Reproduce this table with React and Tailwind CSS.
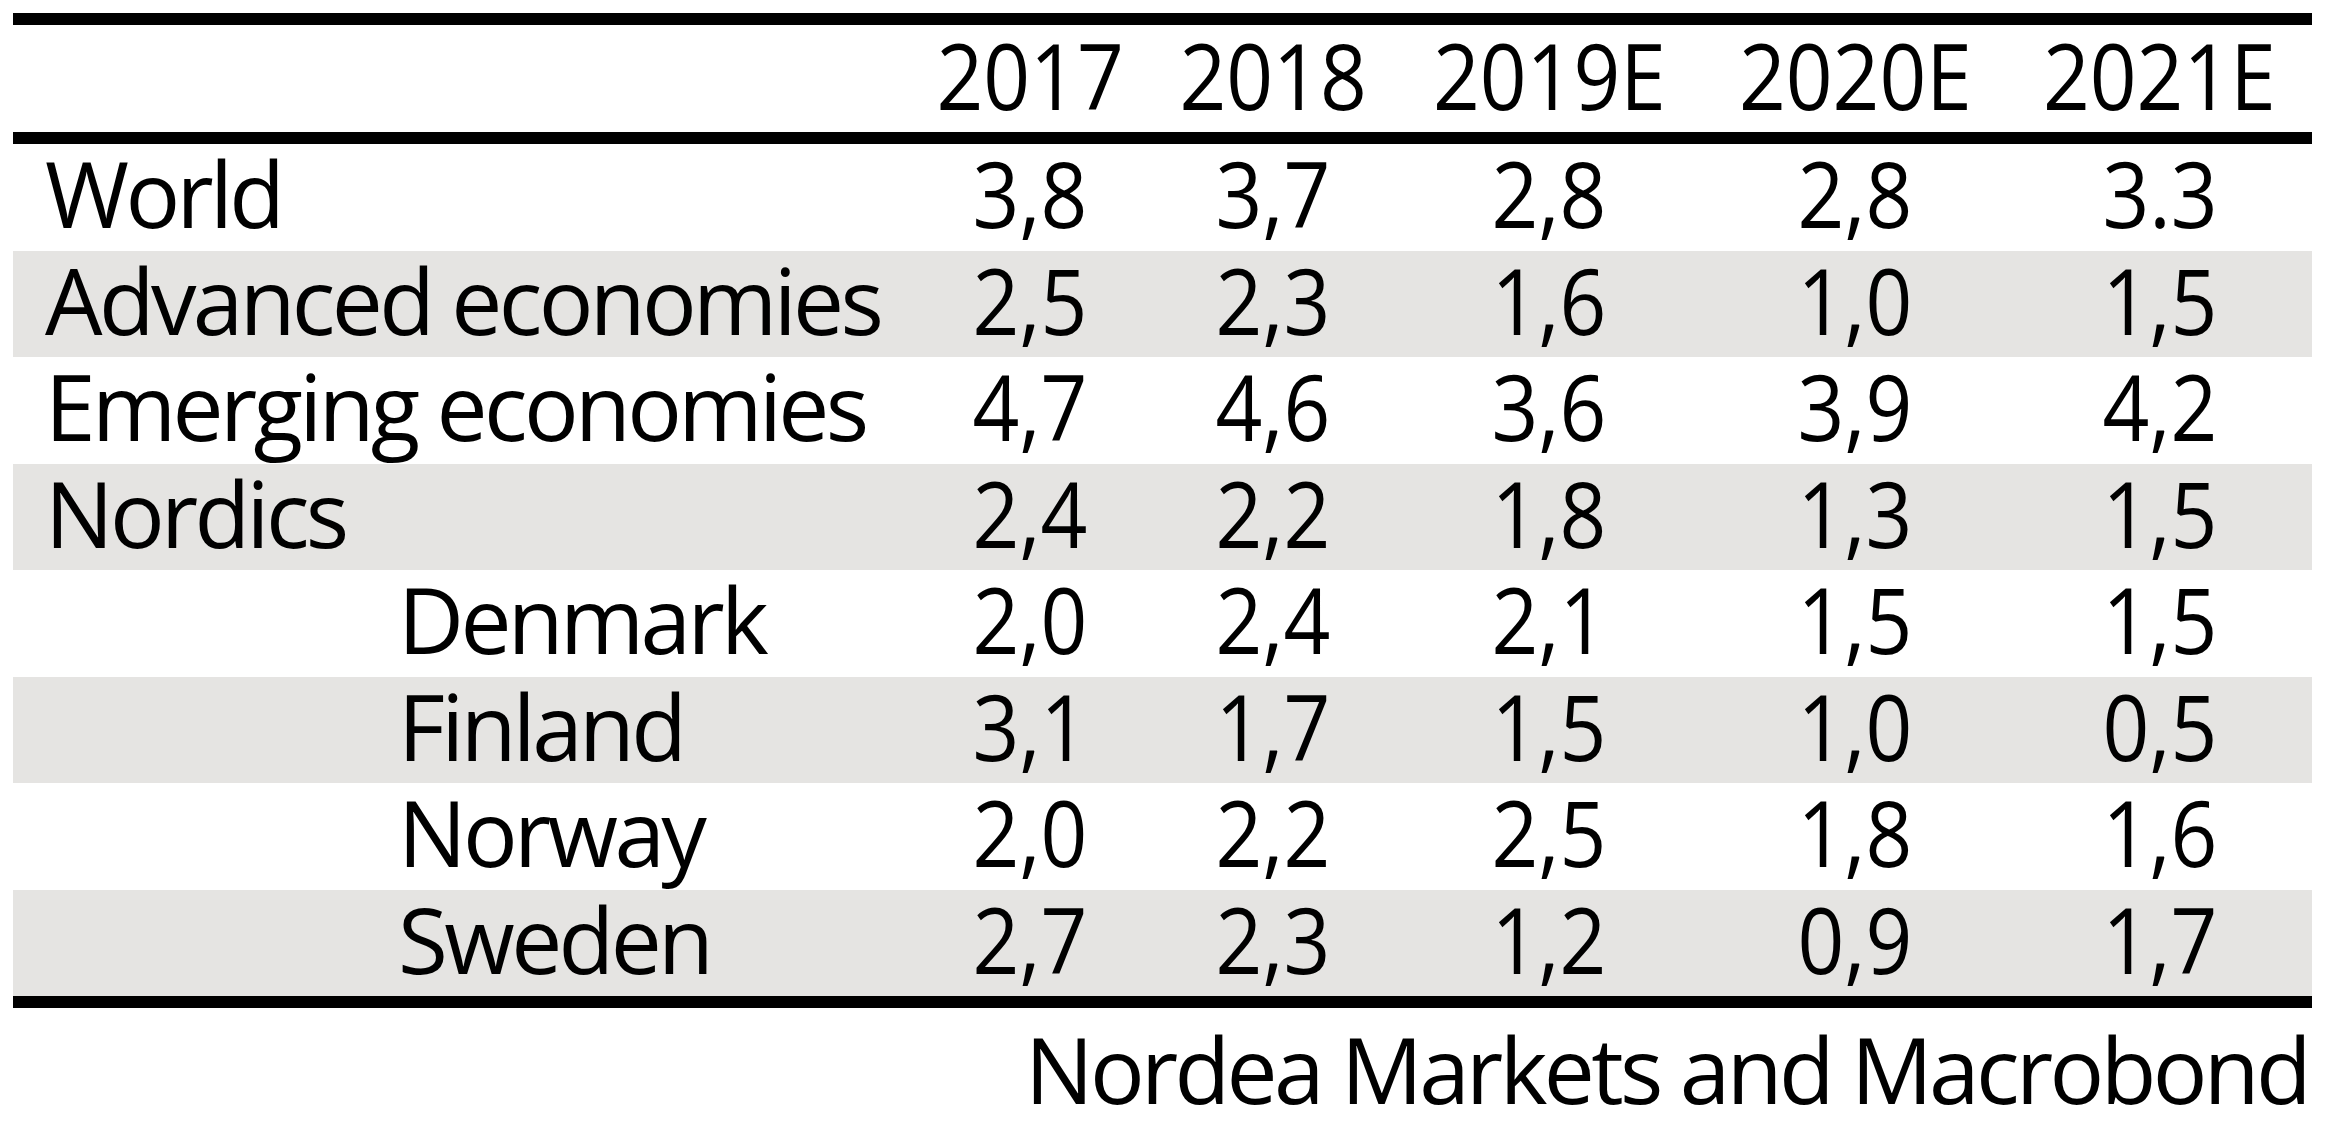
const years = ['2017', '2018', '2019E', '2020E', '2021E'];

const rows = [
  { name: 'World', values: ['3,8', '3,7', '2,8', '2,8', '3.3'] },
  { name: 'Advanced economies', values: ['2,5', '2,3', '1,6', '1,0', '1,5'] },
  { name: 'Emerging economies', values: ['4,7', '4,6', '3,6', '3,9', '4,2'] },
  { name: 'Nordics', values: ['2,4', '2,2', '1,8', '1,3', '1,5'] },
  { name: 'Denmark', values: ['2,0', '2,4', '2,1', '1,5', '1,5'], sub: true },
  { name: 'Finland', values: ['3,1', '1,7', '1,5', '1,0', '0,5'], sub: true },
  { name: 'Norway', values: ['2,0', '2,2', '2,5', '1,8', '1,6'], sub: true },
  { name: 'Sweden', values: ['2,7', '2,3', '1,2', '0,9', '1,7'], sub: true },
];

const grid = 'grid grid-cols-[896px_242px_244px_308px_304px_305px]';
const cell = 'flex items-center h-full pb-[7px]';

function Num({ children }) {
  return (
    <div className={`${cell} justify-center`}>
      <span className="inline-block scale-x-90">{children}</span>
    </div>
  );
}

export default function App() {
  return (
    <div
      className="w-[2325px] h-[1134px] bg-white text-black pt-[13px] pl-[13px] text-[91px] leading-none"
      style={{ fontFamily: '"Open Sans", "Noto Sans", sans-serif' }}
    >
      <div className="w-[2299px]">
        <div className="h-[12px] bg-black" />
        <div className={`${grid} h-[107px]`}>
          <div />
          {years.map((y) => (
            <Num key={y}>{y}</Num>
          ))}
        </div>
        <div className="h-[12px] bg-black" />
        {rows.map((row, i) => (
          <div
            key={row.name}
            className={`${grid} h-[106.5px] ${i % 2 === 1 ? 'bg-[#e5e4e2]' : ''}`}
          >
            <div
              className={`${cell} ${row.sub ? 'pl-[385px]' : 'pl-[32px]'} whitespace-nowrap tracking-[-0.04em]`}
            >
              {row.name}
            </div>
            {row.values.map((v, j) => (
              <Num key={j}>{v}</Num>
            ))}
          </div>
        ))}
        <div className="h-[12px] bg-black" />
        <div className="flex justify-end pr-[4px] leading-[1.362] tracking-[-0.04em]">
          Nordea Markets and Macrobond
        </div>
      </div>
    </div>
  );
}
